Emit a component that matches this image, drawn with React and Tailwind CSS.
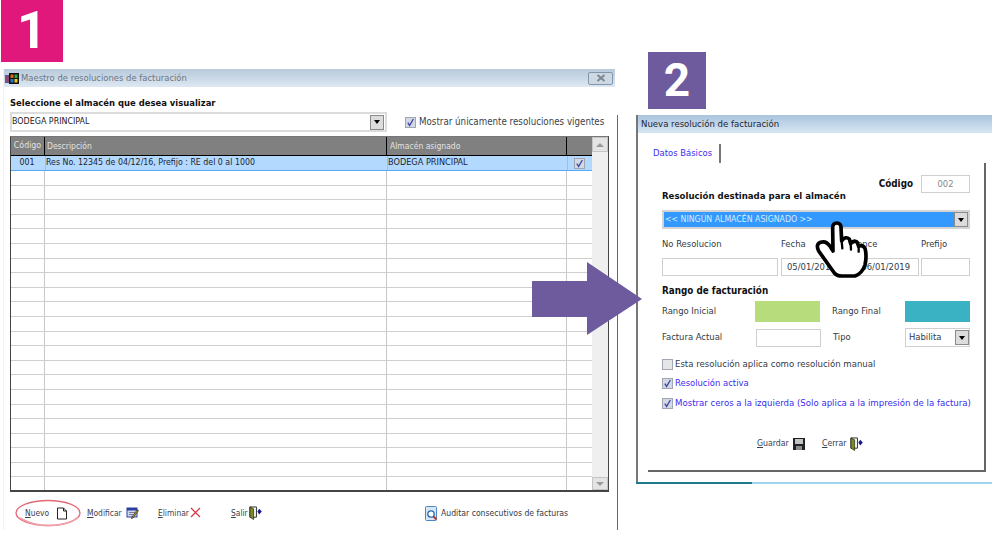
import React from "react";

const Check = ({ checked, className = "" }) => (
  <span className={`flex h-[11px] w-[11px] shrink-0 items-center justify-center border border-[#a0a6b2] ${checked ? "bg-[#d4d8e2]" : "bg-[#e6e6e6]"} ${className}`}>
    {checked && (
      <svg width="9" height="9" viewBox="0 0 9 9">
        <path d="M1.8 4.6 L3.6 7.4 L7.4 1" fill="none" stroke="#3a48a8" strokeWidth="1.3" />
      </svg>
    )}
  </span>
);

const DropBtn = ({ className = "" }) => (
  <span className={`flex shrink-0 items-center justify-center border border-[#8a8a8a] bg-[#dcdcdc] ${className}`}>
    <span className="h-0 w-0 border-x-[3px] border-t-[4px] border-x-transparent border-t-black" />
  </span>
);

const Door = () => (
  <svg width="13" height="14" viewBox="0 0 14 15" className="shrink-0">
    <path d="M1 1 H8 V12 H1 Z" fill="#fff" stroke="#222" strokeWidth="1" />
    <path d="M1 1 L5 3 V14.5 L1 12 Z" fill="#7c8a2a" stroke="#2b2b10" strokeWidth="0.8" />
    <path d="M11 3 L13.8 6 L11 9 L9 6 Z" fill="#1a1a8c" />
  </svg>
);

const Under = ({ k, rest }) => (
  <span className="text-[#3a4252]">
    <span className="underline">{k}</span>
    {rest}
  </span>
);

const Hand = () => (
  <svg width="80" height="80" viewBox="0 0 240 240" className="absolute left-[800px] top-[205px]">
    <path
      d="M103 204 L56 138 Q46 118 62 112 Q78 106 90 124 L99 138 L98 68 Q98 54 110 54 Q123 54 123 68 L125 108 Q137 92 148 102 L152 116 Q162 104 172 112 L176 124 Q188 118 195 130 Q201 152 195 180 Q186 206 165 213 L126 213 Q110 213 103 204 Z"
      fill="#fff"
      stroke="#000"
      strokeWidth="11"
      strokeLinejoin="round"
    />
    <path d="M125 108 L127 130 M152 116 L153 134 M176 124 L176 140" fill="none" stroke="#000" strokeWidth="7" strokeLinecap="round" />
  </svg>
);

const blankRows = Array.from({ length: 22 }, (_, i) => i);

const Window1 = () => (
  <div className="absolute left-[3px] top-[69px] flex h-[461px] w-[612px] flex-col border-l border-[#eef2fa] bg-white text-[9.4px] text-[#2a2a2a]">
    <div className="flex h-[18px] shrink-0 items-center bg-gradient-to-b from-[#b7c9da] to-[#dde8f3] pl-[1px] pr-[2px]">
      <svg width="14" height="13" viewBox="0 0 14 13" className="shrink-0">
        <rect x="0" y="3" width="4" height="8" fill="#4a5a9a" />
        <path d="M0 5 H4 M0 7 H4 M0 9 H4" stroke="#e33" strokeWidth="0.8" />
        <rect x="4" y="1" width="10" height="11" fill="#111" />
        <rect x="5.5" y="2.5" width="3" height="3.5" fill="#d62" />
        <rect x="9.5" y="2.5" width="3" height="3.5" fill="#3a3" />
        <rect x="5.5" y="7" width="3" height="3.5" fill="#27c" />
        <rect x="9.5" y="7" width="3" height="3.5" fill="#ec2" />
      </svg>
      <span className="ml-[2px] whitespace-nowrap text-[#6d7480]">Maestro de resoluciones de facturación</span>
      <span className="ml-auto flex h-[13px] w-[25px] items-center justify-center rounded-[2px] border border-[#8296ac] bg-[#cdd8e3]">
        <svg width="10" height="8" viewBox="0 0 10 8">
          <path d="M1.5 1 L8.5 7 M8.5 1 L1.5 7" stroke="#7a8794" strokeWidth="2" />
        </svg>
      </span>
    </div>

    <div className="flex min-h-0 flex-1 flex-col pl-[6px]">
      <div className="mt-[9px] h-[14px] whitespace-nowrap text-[9.4px] font-bold leading-[14px] text-[#111]">Seleccione el almacén que desea visualizar</div>
      <div className="mt-[2px] flex h-[20px] items-center">
        <div className="flex h-full w-[377px] items-center border-2 border-[#dcdcdc] bg-white pr-[1px]">
          <span className="whitespace-nowrap text-[8.85px] text-[#222]">BODEGA PRINCIPAL</span>
          <DropBtn className="ml-auto h-[15px] w-[14px]" />
        </div>
        <Check checked className="ml-[18px]" />
        <span className="ml-[3px] whitespace-nowrap text-[9.7px] text-[#3a3f4a]">Mostrar únicamente resoluciones vigentes</span>
      </div>

      <div className="mt-[4px] flex h-[356px] w-[599px] overflow-hidden border border-b-2 border-[#444] border-t-[#777] text-[8.75px]">
        <div className="w-[581px] shrink-0">
          <div className="grid h-[19px] grid-cols-[34px_342px_180px_25px] border-b border-black bg-[#808080] text-[#e2e2e2]">
            <div className="flex items-center justify-center border-r border-black">Código</div>
            <div className="flex items-center border-r border-black pl-[2px] text-[8.5px]">Descripción</div>
            <div className="flex items-center border-r border-black pl-[3px] text-[8.5px]">Almacén asignado</div>
            <div />
          </div>
          <div className="grid h-[15px] grid-cols-[34px_342px_180px_25px] border-b border-[#58a8f8] bg-[#b3d9ff] text-[#1c2430]">
            <div className="flex items-center justify-center pr-[2px]">001</div>
            <div className="flex items-center whitespace-nowrap border-l border-[#9cc0e0]">Res No. 12345 de 04/12/16, Prefijo : RE del 0 al 1000</div>
            <div className="flex items-center whitespace-nowrap border-l border-[#9cc0e0] text-[9.1px]">BODEGA PRINCIPAL</div>
            <div className="flex items-center justify-center border-l border-[#9cc0e0] pr-[1px]">
              <Check checked />
            </div>
          </div>
          {blankRows.map((i) => (
            <div key={i} className="grid h-[14.6px] grid-cols-[34px_342px_180px_25px] border-b border-[#cfcfcf]">
              <div className="border-r border-[#c8c8c8]" />
              <div className="border-r border-[#c8c8c8]" />
              <div className="border-r border-[#c8c8c8]" />
              <div />
            </div>
          ))}
        </div>
        <div className="flex w-[16px] flex-col justify-between bg-[#efefef]">
          <div className="flex h-[15px] items-center justify-center border border-[#c4c4c4] bg-[#e4e4e4]">
            <span className="h-0 w-0 border-x-[4px] border-b-[4px] border-x-transparent border-b-[#9a9a9a]" />
          </div>
          <div className="flex h-[13px] items-center justify-center border border-[#c4c4c4] bg-[#e4e4e4]">
            <span className="h-0 w-0 border-x-[4px] border-t-[4px] border-x-transparent border-t-[#9a9a9a]" />
          </div>
        </div>
      </div>

      <div className="mt-[13px] flex h-[16px] items-center pl-[15px] text-[8.4px]">
        <div className="flex w-[62px] items-center">
          <span className="w-[31px]"><Under k="N" rest="uevo" /></span>
          <svg width="12" height="13" viewBox="0 0 12 13">
            <path d="M1.5 1 H7.5 L10.5 4 V12 H1.5 Z M7.5 1 V4 H10.5" fill="#fff" stroke="#222" strokeWidth="1" />
          </svg>
        </div>
        <div className="flex w-[71px] items-center">
          <span className="w-[39px]"><Under k="M" rest="odificar" /></span>
          <svg width="13" height="12" viewBox="0 0 13 12">
            <rect x="1" y="1" width="10" height="9" fill="#cfd8f0" stroke="#2a3fa0" />
            <rect x="1" y="1" width="10" height="2.5" fill="#2a3fa0" />
            <path d="M3 5.5 H9 M3 7.5 H7" stroke="#667" strokeWidth="0.8" />
            <path d="M12.5 3.5 L7 11 L5.5 11.5 L6 10 L11 3 Z" fill="#c9a227" stroke="#222" strokeWidth="0.7" />
          </svg>
        </div>
        <div className="flex w-[73px] items-center">
          <span className="w-[32px]"><Under k="E" rest="liminar" /></span>
          <svg width="11" height="11" viewBox="0 0 11 11">
            <path d="M1 1 L10 10 M10 1 L1 10" stroke="#d8394a" strokeWidth="1.3" />
          </svg>
        </div>
        <div className="flex w-[194px] items-center">
          <span className="w-[18px]"><Under k="S" rest="alir" /></span>
          <Door />
        </div>
        <div className="flex items-center">
          <svg width="13" height="15" viewBox="0 0 13 15" className="shrink-0">
            <rect x="0.5" y="0.5" width="11" height="14" rx="1" fill="#d6e6f7" stroke="#4f86c0" />
            <circle cx="6" cy="8" r="3.2" fill="#fff" stroke="#2b6cb0" strokeWidth="1.3" />
            <path d="M8.5 10.5 L11.5 13.5" stroke="#c8322a" strokeWidth="2" />
          </svg>
          <span className="ml-[3px] whitespace-nowrap text-[8.6px] text-[#333a46]">Auditar consecutivos de facturas</span>
        </div>
      </div>
    </div>
  </div>
);

const Box = ({ className = "", children }) => (
  <div className={`flex h-[18px] items-center whitespace-nowrap border border-[#cfcfcf] bg-white ${className}`}>{children}</div>
);

const Window2 = () => (
  <div className="absolute left-[636px] top-[115px] flex h-[368px] w-[356px] flex-col border-l-2 border-[#777] bg-white text-[9.4px] text-[#333a46]">
    <div className="flex h-[18px] shrink-0 items-center whitespace-nowrap bg-gradient-to-b from-[#a9c4de] to-[#d8e6f3] pl-[3px] text-[9.5px] text-[#1f2530]">
      Nueva resolución de facturación
    </div>
    <div className="ml-[15px] mt-[11px] flex h-[19px] w-[68px] shrink-0 items-center whitespace-nowrap border-r-2 border-[#777] text-[#3a2cf0]">
      Datos Básicos
    </div>
    <div className="ml-[10px] flex h-[309px] w-[338px] shrink-0 flex-col border-b-2 border-r-2 border-[#666] pl-[14px]">
      <div className="mt-[12px] flex h-[28px] w-[308px] justify-between">
        <span className="self-end whitespace-nowrap text-[9.55px] font-bold leading-[14px] text-[#111]">Resolución destinada para el almacén</span>
        <div className="flex h-[18px] items-center gap-[8px]">
          <span className="text-[9.8px] font-bold text-[#111]">Código</span>
          <Box className="w-[49px] justify-center text-[#8a8a8a]">002</Box>
        </div>
      </div>
      <div className="mt-[7px] flex h-[19px] w-[308px] items-center border-2 border-[#d4d4d4] bg-[#3399ff] text-[8.7px] text-[#d8ecff]">
        <span className="whitespace-nowrap pl-[1px]">&lt;&lt; NINGÚN ALMACÉN ASIGNADO &gt;&gt;</span>
        <DropBtn className="ml-auto h-[15px] w-[14px]" />
      </div>
      <div className="mt-[8px] flex h-[14px] items-center leading-[14px]">
        <span className="w-[119px]">No Resolucion</span>
        <span className="w-[71px]">Fecha</span>
        <span className="w-[69px]">Vence</span>
        <span>Prefijo</span>
      </div>
      <div className="mt-[7px] flex">
        <Box className="w-[116px]" />
        <Box className="ml-[3px] w-[70px] pl-[5px]">05/01/2019</Box>
        <Box className="w-[68px] justify-end border-l-0 pr-[8px]">06/01/2019</Box>
        <Box className="ml-[2px] w-[49px]" />
      </div>
      <div className="mt-[8px] h-[14px] text-[9.8px] font-bold leading-[14px] text-[#111]">Rango de facturación</div>
      <div className="mt-[3px] flex h-[21px] items-center">
        <span className="w-[93px]">Rango Inicial</span>
        <span className="h-full w-[65px] bg-[#b7dc7c]" />
        <span className="ml-[12px] w-[73px]">Rango Final</span>
        <span className="h-full w-[65px] bg-[#3ab2c4]" />
      </div>
      <div className="mt-[6px] flex h-[19px] items-center">
        <span className="w-[94px]">Factura Actual</span>
        <Box className="h-[18px] w-[65px]" />
        <span className="ml-[12px] w-[72px]">Tipo</span>
        <div className="flex h-[19px] w-[65px] items-center border border-[#cfcfcf] pl-[3px]">
          Habilita
          <DropBtn className="ml-auto h-[15px] w-[14px]" />
        </div>
      </div>
      <div className="mt-[10px] flex h-[14px] items-center gap-[2px] whitespace-nowrap text-[9.5px]">
        <Check />
        <span>Esta resolución aplica como resolución manual</span>
      </div>
      <div className="mt-[5px] flex h-[14px] items-center gap-[2px] whitespace-nowrap text-[#3a2cf0]">
        <Check checked />
        <span>Resolución activa</span>
      </div>
      <div className="mt-[6px] flex h-[14px] items-center gap-[2px] whitespace-nowrap text-[9.55px] text-[#3a2cf0]">
        <Check checked />
        <span>Mostrar ceros a la izquierda (Solo aplica a la impresión de la factura)</span>
      </div>
      <div className="ml-[95px] mt-[26px] flex h-[16px] items-center text-[8.7px]">
        <span className="w-[36px]"><Under k="G" rest="uardar" /></span>
        <svg width="12" height="12" viewBox="0 0 12 12">
          <rect x="0" y="0" width="12" height="12" fill="#222" />
          <rect x="2" y="1" width="8" height="5" fill="#bfc4c4" />
          <rect x="3" y="8" width="6" height="4" fill="#8a8f8f" />
        </svg>
        <span className="ml-[17px] w-[28px]"><Under k="C" rest="errar" /></span>
        <Door />
      </div>
    </div>
    <div className="ml-[-2px] mt-[10px] flex h-[2px] shrink-0">
      <span className="w-[116px] bg-[#1f7a8c]" />
      <span className="flex-1 bg-[#9fd6ee]" />
    </div>
  </div>
);

export default function App() {
  return (
    <div className="relative h-[553px] w-[1000px] overflow-hidden bg-white font-['DejaVu_Sans_Condensed','DejaVu_Sans',sans-serif]">
      <div className="absolute left-[1px] top-0 flex h-[62px] w-[62px] items-center justify-center bg-[#e0187c] font-['Roboto',sans-serif] text-[52px] font-bold text-white">1</div>
      <Window1 />
      <div className="absolute left-[617px] top-[115px] h-[415px] w-[1px] bg-[#5b6a86]" />
      <Window2 />
      <div className="absolute left-[648px] top-[52px] flex h-[57px] w-[58px] items-center justify-center bg-[#6e5b9e] font-['Roboto',sans-serif] text-[46px] font-bold text-white">2</div>
      <svg width="112" height="76" viewBox="0 0 112 76" className="absolute left-[531px] top-[261px]">
        <path d="M1 20 H56 V1 L111 38 L56 74 V56 H1 Z" fill="#6e5b9e" />
      </svg>
      <Hand />
      <svg width="68" height="30" viewBox="0 0 68 30" className="absolute left-[14px] top-[498px]">
        <ellipse cx="34" cy="15" rx="32" ry="12.5" fill="none" stroke="#e36a78" strokeWidth="1.3" />
        <path d="M6 20 Q20 28 36 27.5 Q56 27 64 19" fill="none" stroke="#f0a0a8" strokeWidth="1.5" />
      </svg>
    </div>
  );
}
